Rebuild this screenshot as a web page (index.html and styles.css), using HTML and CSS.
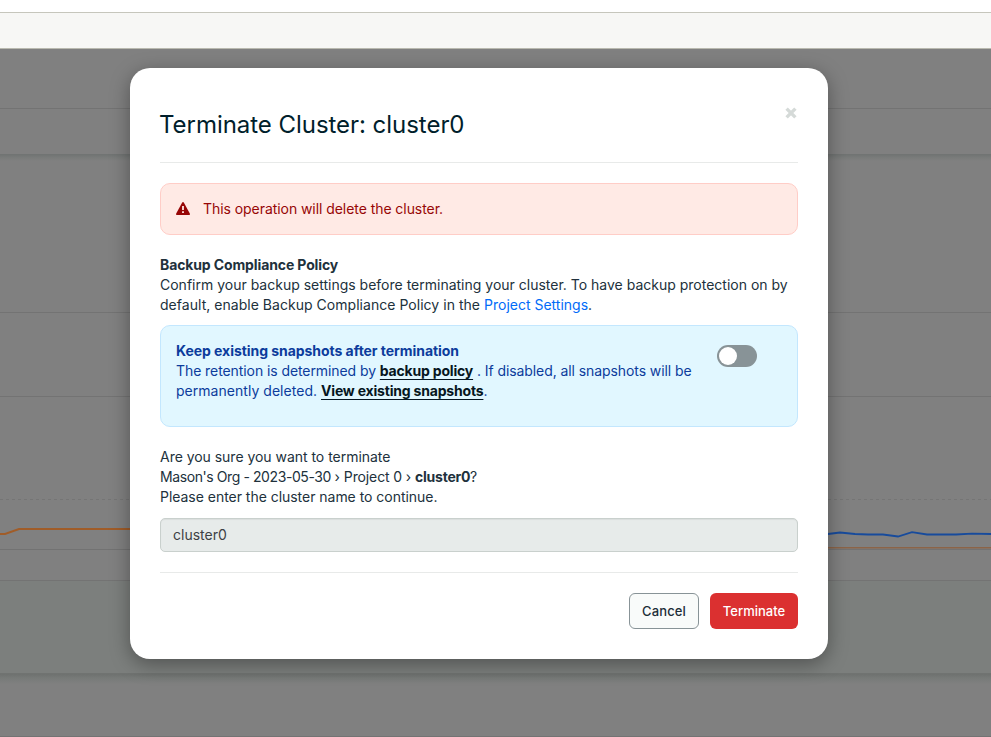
FILE: index.html
```html
<!DOCTYPE html>
<html lang="en">
<head>
<meta charset="utf-8">
<title>Terminate Cluster</title>
<link rel="stylesheet" href="styles.css">
</head>
<body>
<div class="topbar"></div>
<div class="subbar"></div>
<main class="page">
  <div class="row row-head"></div>
  <div class="row row-tabs"></div>
  <div class="row row-summary"></div>
  <div class="row row-metrics"></div>
  <div class="row row-chart">
    <svg class="chart" viewBox="0 0 991 153" width="991" height="153" fill="none">
      <path d="M0 102.5H991" stroke="#757575" stroke-dasharray="3 3"/>
      <path d="M0 152.5H991" stroke="#727272"/>
      <path d="M0 137H5L19 132H140" stroke="#a05c28" stroke-width="2"/>
      <path d="M820 150.7H991" stroke="#8b6448" stroke-width="1.4"/>
      <path d="M820 137L828 137L840 135.5L855 137L868 137.5H883L898 139.5L912 135.2L927 137.5H956L972 136.7L991 137" stroke="#174b9c" stroke-width="1.8"/>
    </svg>
  </div>
  <div class="row row-axis"></div>
  <div class="row row-footer"></div>
  <div class="row row-rest"></div>
</main>
<section class="modal" role="dialog" aria-labelledby="title">
  <header class="modal-header">
    <h1 class="title" id="title">Terminate Cluster: cluster0</h1>
    <button class="close" aria-label="Close">
      <svg width="14" height="14" viewBox="0 0 14 14"><path d="M2.6 2.6L11.4 11.4M11.4 2.6L2.6 11.4" stroke="#d5dad8" stroke-width="3.4"/></svg>
    </button>
  </header>
  <div class="modal-body">
    <div class="alert">
      <svg class="alert-icon" width="14" height="13" viewBox="0 0 14 13"><path d="M6.2.5Q7-.4 7.8.5L13.8 11.5Q14.2 13 13 13H1Q-.2 13 .2 11.5Z" fill="#970606"/><path d="M6.1 4H7.9V8H6.1ZM6.1 9.3H7.9V11.1H6.1Z" fill="#ffeae5"/></svg>
      <span>This operation will delete the cluster.</span>
    </div>
    <p class="text policy"><strong>Backup Compliance Policy</strong><br>Confirm your backup settings before terminating your cluster. To have backup protection on by<br><span class="wide">default, enable Backup Compliance Policy in the <a class="link">Project Settings</a>.</span></p>
    <div class="snapshots">
      <p class="text snapshots-text"><strong class="snapshots-title">Keep existing snapshots after termination</strong><br><span class="tight">The retention is determined by </span><a class="action">backup policy</a><span class="tight"> . If disabled, all snapshots will be</span><br><span class="wide">permanently deleted. </span><a class="action">View existing snapshots</a>.</p>
      <span class="toggle" role="switch" aria-checked="false"></span>
    </div>
    <p class="text confirm">Are you sure you want to terminate<br><span class="org">Mason's Org - 2023-05-30 </span><span class="sep">›</span> <span class="project">Project 0 </span><span class="sep">›</span> <strong class="name">cluster0</strong>?<br>Please enter the cluster name to continue.</p>
    <div class="field">cluster0</div>
  </div>
  <footer class="modal-footer">
    <button class="btn cancel">Cancel</button>
    <button class="btn terminate">Terminate</button>
  </footer>
</section>
</body>
</html>
```
FILE: styles.css
```css
* { box-sizing: border-box; }
body {
  margin: 0;
  height: 737px;
  overflow: hidden;
  background: #fff;
  color: #21313c;
  font: 14px/20px Inter, "Liberation Sans", sans-serif;
}
h1, p { margin: 0; }
button { font: inherit; margin: 0; padding: 0; border: 0; background: none; }
.topbar { height: 13px; border-bottom: 1px solid #c6c6bc; }
.subbar { height: 36px; background: #f7f7f5; border-bottom: 1px solid #b9b9af; }
.page { height: 688px; background: #808080; }
.row { border-bottom: 1px solid #737373; }
.row-head { height: 60px; }
.row-tabs { height: 46px; border-bottom-color: #717473; }
.row-summary { height: 158px; background: linear-gradient(#727574, #7a7c7b 3px, #808080 6px); }
.row-metrics { height: 84px; }
.row-chart { height: 153px; border-bottom: 0; }
.chart { display: block; }
.row-axis { height: 31px; }
.row-footer { height: 93px; background: #7c7f7d; border-bottom: 1px solid #707371; }
.row-rest { height: 63px; background: linear-gradient(#6e716f, #777a78 4px, #808080 10px); }
.modal {
  position: absolute;
  left: 130px;
  top: 68px;
  width: 698px;
  height: 591px;
  padding: 0 30px;
  background: #fff;
  border-radius: 20px;
  box-shadow: 0 5px 20px rgba(0, 0, 0, .36);
}
.modal-header {
  display: flex;
  justify-content: space-between;
  align-items: flex-start;
  height: 95px;
  padding-top: 39px;
  border-bottom: 1px solid #e8eae9;
}
.title { margin-left: -1px; color: #001e2b; font-size: 24px; line-height: 36px; font-weight: 400; letter-spacing: -.04px; }
.close { display: flex; width: 14px; height: 14px; margin-top: -1px; justify-content: center; }
.modal-body { padding: 20px 0; border-bottom: 1px solid #e8eae9; }
.alert {
  display: flex;
  align-items: center;
  height: 52px;
  padding-left: 15px;
  gap: 13px;
  color: #970606;
  background: #ffeae5;
  border: 1px solid #ffcdc7;
  border-radius: 10px;
  letter-spacing: -.06px;
}
.alert-icon { position: relative; top: -.5px; }
.text strong { font-weight: 700; letter-spacing: -.12px; }
.policy { margin-top: 20px; white-space: nowrap; }
.wide { letter-spacing: .033px; }
.link { color: #016bf8; letter-spacing: 0; }
.snapshots {
  display: flex;
  justify-content: space-between;
  height: 102px;
  margin-top: 10px;
  padding: 15px 40px 0 15px;
  color: #0c3c9c;
  background: #e1f7ff;
  border: 1px solid #c3e7fe;
  border-radius: 10px;
}
.snapshots-text { white-space: nowrap; }
.text .snapshots-title { letter-spacing: -.05px; }
.tight { letter-spacing: -.08px; }
.action {
  color: #061621;
  font-weight: 700;
  letter-spacing: -.19px;
  text-decoration: underline;
  text-decoration-thickness: 1px;
  text-underline-offset: 3px;
}
.toggle {
  display: flex;
  width: 40px;
  height: 22px;
  margin-top: 4px;
  padding: 2px;
  background: #889397;
  border-radius: 11px;
}
.toggle::before { content: ""; width: 18px; height: 18px; background: #fff; border-radius: 50%; }
.confirm { margin-top: 20px; letter-spacing: -.03px; white-space: nowrap; }
.org { letter-spacing: -.41px; }
.project { letter-spacing: -.12px; }
.text .name { letter-spacing: -.26px; }
.field {
  height: 34px;
  margin-top: 11px;
  padding: 6px 12px;
  color: #3d4144;
  background: #e7ebea;
  border: 1px solid #c9d0cd;
  border-radius: 5px;
  box-shadow: inset 0 1px 1px rgba(0, 0, 0, .06);
}
.modal-footer { display: flex; justify-content: flex-end; gap: 11px; padding-top: 20px; }
.btn { height: 36px; border-radius: 6px; font-size: 13px; font-weight: 500; }
.cancel { width: 70px; color: #1c2d38; background: #f9fbfa; border: 1px solid #889397; letter-spacing: .14px; }
.terminate { width: 88px; color: #fff; background: #db3030; }
```
